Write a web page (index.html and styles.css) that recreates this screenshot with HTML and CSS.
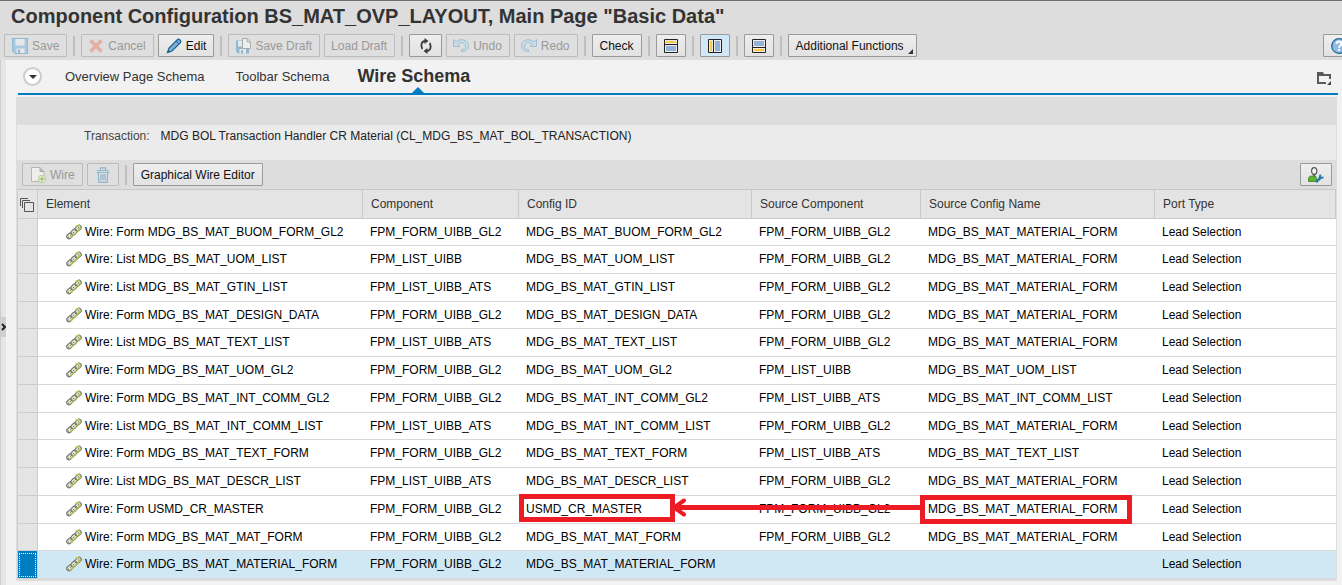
FILE: index.html
```html
<!DOCTYPE html>
<html lang="en">
<head>
<meta charset="utf-8">
<title>Component Configuration BS_MAT_OVP_LAYOUT</title>
<link rel="stylesheet" href="styles.css">
</head>
<body>
<svg class="defs" aria-hidden="true">
  <symbol id="link" viewBox="0 0 16 16">
    <g fill="#e9ead8" stroke="#77776c" stroke-width="1.2">
      <rect x="-3.2" y="-2.2" width="6.4" height="4.4" rx="2" transform="translate(3.8 11.8) rotate(-42)"/>
      <rect x="-3.2" y="-2.2" width="6.4" height="4.4" rx="2" transform="translate(8 8) rotate(-42)"/>
      <rect x="-3.2" y="-2.2" width="6.4" height="4.4" rx="2" transform="translate(12.2 4.2) rotate(-42)"/>
    </g>
    <path d="M1.500 14L14.500 2" stroke="#666" stroke-width="1" stroke-dasharray="2 1.500"/>
    <path d="M4.500 14L8 10.500M8.500 10.500L11 7.500M11.500 7L15 3.500M9.500 2.500L14 .8" stroke="#b3c14a" stroke-width="1.400" fill="none"/>
  </symbol>
  <symbol id="disk" viewBox="0 0 16 16">
    <path d="M.5.5H15.5V15.5H3L.5 13Z" fill="#a9c9dc" stroke="#8fb7cf"/>
    <path d="M3.5 1H12.5V7.5H3.5Z" fill="#e6e9eb"/>
    <path d="M4.5 10.5H12.5V15H4.5Z" fill="#e6e9eb"/>
    <path d="M6 11.5H8V15H6Z" fill="#8fb9d2"/>
  </symbol>
</svg>

<header class="page-head">
  <h1>Component Configuration BS_MAT_OVP_LAYOUT, Main Page "Basic Data"</h1>
  <div class="toolbar" role="toolbar">
    <button class="btn" disabled><svg class="ico" viewBox="0 0 16 16"><use href="#disk"/></svg>Save</button>
    <span class="sep"></span>
    <button class="btn" disabled><svg class="ico" viewBox="0 0 16 16"><path d="M2.500 2.500L13.500 13.500M13.500 2.500L2.500 13.500" stroke="#e2afa0" stroke-width="3.4"/></svg>Cancel</button>
    <button class="btn"><svg class="ico" viewBox="0 0 16 16"><path d="M1.5 14.5L3 10L11 2Q12.500 .5 14 2Q15.500 3.500 14 5L6 13Z" fill="#7fb0da" stroke="#1d6390" stroke-width="1.2"/><path d="M10 3L13 6" stroke="#1d6390" fill="none"/><path d="M1 15L2.300 11.500L4.500 13.700Z" fill="#1d6390"/></svg>Edit</button>
    <span class="sep"></span>
    <button class="btn" disabled><svg class="ico" viewBox="0 0 16 16"><path d="M1 2.500H7V9H14V15.500H3L1 13.500Z" fill="#8fb9d2"/><path d="M3 3V8.500H7V3Z M4.500 11H11V15.500H4.500Z" fill="#e6e9eb"/><path d="M6 12H8V15.500H6Z" fill="#8fb9d2"/><path d="M7.500 .5H12L15.500 4V10.500H7.500Z" fill="#efefef" stroke="#a9a9a9"/><path d="M12 .5V4H15.500" fill="none" stroke="#a9a9a9"/></svg>Save Draft</button>
    <button class="btn" disabled>Load Draft</button>
    <span class="sep"></span>
    <button class="btn btn-icon" aria-label="Refresh"><svg class="ico" viewBox="0 0 16 16"><path d="M7.500 3C3.500 3 2.300 7 4.300 11M8.500 13C12.500 13 13.700 9 11.700 5" fill="none" stroke="#3c3c3c" stroke-width="1.800"/><path d="M6.500 0L10.500 3L6.500 6ZM9.500 10V16L5.500 13Z" fill="#3c3c3c"/></svg></button>
    <button class="btn" disabled><svg class="ico" viewBox="0 0 16 16"><path d="M.5 1.500V8.500H7L4.800 6.300C7 3.500 12.500 4.500 12.500 8C12.500 10.500 11 11.500 8.500 11.500V13.500C13 13.500 15.500 11 15.500 7.500C15.500 1.500 7 0 3 3.800Z" fill="#c9dbe6" stroke="#9bc0d5"/></svg>Undo</button>
    <button class="btn" disabled><svg class="ico" viewBox="0 0 16 16"><path d="M15.500 1.500V8.500H9L11.200 6.300C9 3.500 3.500 4.500 3.500 8C3.500 10.500 5 11.500 7.500 11.500V13.500C3 13.500 .5 11 .5 7.500C.5 1.500 9 0 13 3.800Z" fill="#c9dbe6" stroke="#9bc0d5"/></svg>Redo</button>
    <span class="sep"></span>
    <button class="btn">Check</button>
    <span class="sep"></span>
    <button class="btn btn-view" aria-label="Navigation on top"><svg class="ico" viewBox="0 0 16 16"><path d="M1.500 1.500H14.500V14.500H1.500Z" fill="#ececec" stroke="#222"/><path d="M3 3H13V5H3Z" fill="#ffc83d"/><path d="M1 6.500H15" stroke="#222"/><path d="M3 8H13V13H3Z" fill="#94b2d6"/></svg></button>
    <span class="sep"></span>
    <button class="btn btn-view btn-on" aria-label="Navigation on the left" aria-pressed="true"><svg class="ico" viewBox="0 0 16 16"><path d="M1.500 1.500H14.500V14.500H1.500Z" fill="#ececec" stroke="#222"/><path d="M3 3H5V13H3Z" fill="#ffc83d"/><path d="M6.500 1V15" stroke="#222"/><path d="M8 3H13V13H8Z" fill="#94b2d6"/></svg></button>
    <span class="sep"></span>
    <button class="btn btn-view" aria-label="Navigation at the bottom"><svg class="ico" viewBox="0 0 16 16"><path d="M1.500 1.500H14.500V14.500H1.500Z" fill="#ececec" stroke="#222"/><path d="M3 3H13V8H3Z" fill="#94b2d6"/><path d="M1 9.500H15" stroke="#222"/><path d="M3 11H13V13H3Z" fill="#ffc83d"/></svg></button>
    <span class="sep"></span>
    <button class="btn btn-menu">Additional Functions<svg class="corner" viewBox="0 0 5 5"><path d="M5 0V5H0Z" fill="#333"/></svg></button>
    <button class="btn btn-help" aria-label="Help"><svg class="ico" viewBox="0 0 16 16"><circle cx="8" cy="8" r="7.300" fill="#8fbce4" stroke="#206a99" stroke-width="1.300"/><path d="M5.500 6C5.500 2.800 10.500 2.800 10.500 5.800C10.500 7.500 8 7.500 8 9.800M8 11V13" fill="none" stroke="#fff" stroke-width="2"/></svg></button>
  </div>
</header>

<div class="shell">
  <aside class="rail"><button class="rail-handle" aria-label="Expand panel"><svg class="rail-arrow" viewBox="0 0 5 8"><path d="M1 1L4 4L1 7" fill="none" stroke="#222" stroke-width="2"/></svg></button></aside>
  <main class="content">
    <nav class="tabs">
      <button class="tab-menu" aria-label="Tab list"><svg class="tri" viewBox="0 0 8 4"><path d="M0 0H8L4 4Z" fill="#333"/></svg></button>
      <a class="tab" href="#overview">Overview Page Schema</a>
      <a class="tab" href="#toolbar">Toolbar Schema</a>
      <a class="tab tab-on" href="#wire">Wire Schema</a>
      <button class="tab-folder" aria-label="Select tab"><svg class="folder" viewBox="0 0 15 14"><path d="M0 0H6L7 2H14V7H12V4H2V10H9V12H0Z" fill="#5a5a5a"/><path d="M14 9V13H10Z" fill="#444"/></svg></button>
    </nav>
    <section class="panel" id="wire">
      <div class="info"><span class="info-label">Transaction:</span><span>MDG BOL Transaction Handler CR Material (CL_MDG_BS_MAT_BOL_TRANSACTION)</span></div>
      <div class="table-bar" role="toolbar">
        <button class="btn" disabled><svg class="ico" viewBox="0 0 16 16"><path d="M1.500 .5H10L14 4.500V14.500H1.500Z" fill="#eee" stroke="#b5b5b5"/><path d="M10 .5V4.500H14" fill="#bbb" stroke="#aaa"/><circle cx="12" cy="12" r="3.700" fill="#eef1e8" stroke="#b6cf90"/><path d="M12 9.500V14.500M9.500 12H14.500" stroke="#a3c46c" stroke-width="1.500"/></svg>Wire</button>
        <button class="btn btn-bin" disabled aria-label="Delete"><svg class="ico" viewBox="0 0 16 16"><path d="M2 3.500H14M5.500 3V.8H10.500V3M3.200 4.500L3.800 15.300H12.200L12.800 4.500M1.500 5.500H14.500M6 7V13.500M8 7V13.500M10 7V13.500" fill="none" stroke="#8fb4cb" stroke-width="1.200"/></svg></button>
        <span class="sep"></span>
        <button class="btn">Graphical Wire Editor</button>
        <button class="btn btn-person" aria-label="Personalize"><svg class="ico" viewBox="0 0 16 16"><path d="M.5 14.500V11.500Q.8 9 3.500 9H6.500Q8.500 9 8.500 11.500V14.500Z" fill="#5fb52a" stroke="#3b7f17" stroke-width=".8"/><path d="M4.500 7L6.200 10L8 7Z" fill="#555"/><ellipse cx="6.200" cy="4" rx="2.600" ry="3.400" fill="#f6f6f6" stroke="#555" stroke-width="1.200"/><path d="M8 15L13 10.500" stroke="#2878ab" stroke-width="2.400"/><path d="M12.500 7.500L11.500 10.800L15.500 10.500" fill="none" stroke="#2878ab" stroke-width="1.800"/></svg></button>
      </div>
      <div class="grid-wrap">
        <table class="grid">
          <colgroup><col class="c-sel"><col class="c-el"><col class="c-comp"><col class="c-cfg"><col class="c-src"><col class="c-name"><col></colgroup>
          <thead><tr><th class="sel"><svg class="stack" viewBox="0 0 16 16"><path d="M1.500 9V1.500H9M3.500 11V3.500H11M5.500 5.500H14.500V14.500H5.500Z" fill="none" stroke="#555"/></svg></th><th>Element</th><th>Component</th><th>Config ID</th><th>Source Component</th><th>Source Config Name</th><th>Port Type</th></tr></thead>
          <tbody>
            <tr><td class="sel"></td><td class="el"><svg class="link" viewBox="0 0 16 16"><use href="#link"/></svg>Wire: Form MDG_BS_MAT_BUOM_FORM_GL2</td><td>FPM_FORM_UIBB_GL2</td><td>MDG_BS_MAT_BUOM_FORM_GL2</td><td>FPM_FORM_UIBB_GL2</td><td>MDG_BS_MAT_MATERIAL_FORM</td><td>Lead Selection</td></tr>
            <tr><td class="sel"></td><td class="el"><svg class="link" viewBox="0 0 16 16"><use href="#link"/></svg>Wire: List MDG_BS_MAT_UOM_LIST</td><td>FPM_LIST_UIBB</td><td>MDG_BS_MAT_UOM_LIST</td><td>FPM_FORM_UIBB_GL2</td><td>MDG_BS_MAT_MATERIAL_FORM</td><td>Lead Selection</td></tr>
            <tr><td class="sel"></td><td class="el"><svg class="link" viewBox="0 0 16 16"><use href="#link"/></svg>Wire: List MDG_BS_MAT_GTIN_LIST</td><td>FPM_LIST_UIBB_ATS</td><td>MDG_BS_MAT_GTIN_LIST</td><td>FPM_FORM_UIBB_GL2</td><td>MDG_BS_MAT_MATERIAL_FORM</td><td>Lead Selection</td></tr>
            <tr><td class="sel"></td><td class="el"><svg class="link" viewBox="0 0 16 16"><use href="#link"/></svg>Wire: Form MDG_BS_MAT_DESIGN_DATA</td><td>FPM_FORM_UIBB_GL2</td><td>MDG_BS_MAT_DESIGN_DATA</td><td>FPM_FORM_UIBB_GL2</td><td>MDG_BS_MAT_MATERIAL_FORM</td><td>Lead Selection</td></tr>
            <tr><td class="sel"></td><td class="el"><svg class="link" viewBox="0 0 16 16"><use href="#link"/></svg>Wire: List MDG_BS_MAT_TEXT_LIST</td><td>FPM_LIST_UIBB_ATS</td><td>MDG_BS_MAT_TEXT_LIST</td><td>FPM_FORM_UIBB_GL2</td><td>MDG_BS_MAT_MATERIAL_FORM</td><td>Lead Selection</td></tr>
            <tr><td class="sel"></td><td class="el"><svg class="link" viewBox="0 0 16 16"><use href="#link"/></svg>Wire: Form MDG_BS_MAT_UOM_GL2</td><td>FPM_FORM_UIBB_GL2</td><td>MDG_BS_MAT_UOM_GL2</td><td>FPM_LIST_UIBB</td><td>MDG_BS_MAT_UOM_LIST</td><td>Lead Selection</td></tr>
            <tr><td class="sel"></td><td class="el"><svg class="link" viewBox="0 0 16 16"><use href="#link"/></svg>Wire: Form MDG_BS_MAT_INT_COMM_GL2</td><td>FPM_FORM_UIBB_GL2</td><td>MDG_BS_MAT_INT_COMM_GL2</td><td>FPM_LIST_UIBB_ATS</td><td>MDG_BS_MAT_INT_COMM_LIST</td><td>Lead Selection</td></tr>
            <tr><td class="sel"></td><td class="el"><svg class="link" viewBox="0 0 16 16"><use href="#link"/></svg>Wire: List MDG_BS_MAT_INT_COMM_LIST</td><td>FPM_LIST_UIBB_ATS</td><td>MDG_BS_MAT_INT_COMM_LIST</td><td>FPM_FORM_UIBB_GL2</td><td>MDG_BS_MAT_MATERIAL_FORM</td><td>Lead Selection</td></tr>
            <tr><td class="sel"></td><td class="el"><svg class="link" viewBox="0 0 16 16"><use href="#link"/></svg>Wire: Form MDG_BS_MAT_TEXT_FORM</td><td>FPM_FORM_UIBB_GL2</td><td>MDG_BS_MAT_TEXT_FORM</td><td>FPM_LIST_UIBB_ATS</td><td>MDG_BS_MAT_TEXT_LIST</td><td>Lead Selection</td></tr>
            <tr><td class="sel"></td><td class="el"><svg class="link" viewBox="0 0 16 16"><use href="#link"/></svg>Wire: List MDG_BS_MAT_DESCR_LIST</td><td>FPM_LIST_UIBB_ATS</td><td>MDG_BS_MAT_DESCR_LIST</td><td>FPM_FORM_UIBB_GL2</td><td>MDG_BS_MAT_MATERIAL_FORM</td><td>Lead Selection</td></tr>
            <tr><td class="sel"></td><td class="el"><svg class="link" viewBox="0 0 16 16"><use href="#link"/></svg>Wire: Form USMD_CR_MASTER</td><td>FPM_FORM_UIBB_GL2</td><td>USMD_CR_MASTER</td><td>FPM_FORM_UIBB_GL2</td><td>MDG_BS_MAT_MATERIAL_FORM</td><td>Lead Selection</td></tr>
            <tr><td class="sel"></td><td class="el"><svg class="link" viewBox="0 0 16 16"><use href="#link"/></svg>Wire: Form MDG_BS_MAT_MAT_FORM</td><td>FPM_FORM_UIBB_GL2</td><td>MDG_BS_MAT_MAT_FORM</td><td>FPM_FORM_UIBB_GL2</td><td>MDG_BS_MAT_MATERIAL_FORM</td><td>Lead Selection</td></tr>
            <tr class="row-on"><td class="sel"></td><td class="el"><svg class="link" viewBox="0 0 16 16"><use href="#link"/></svg>Wire: Form MDG_BS_MAT_MATERIAL_FORM</td><td>FPM_FORM_UIBB_GL2</td><td>MDG_BS_MAT_MATERIAL_FORM</td><td></td><td></td><td>Lead Selection</td></tr>
          </tbody>
        </table>
        <svg class="callout" viewBox="0 0 613 30" aria-hidden="true">
          <g fill="none" stroke="#ed1c24">
            <path d="M2.500 2.500H153.500V25.500H2.500Z M403.500 3.500H610.500V27.500H403.500Z" stroke-width="5"/>
            <path d="M155 13.500H405" stroke-width="5"/>
            <path d="M165 6.500L155 13.500L165 20.500" stroke-width="4" stroke-linecap="round"/>
          </g>
        </svg>
      </div>
    </section>
  </main>
</div>
</body>
</html>
```

FILE: styles.css
```css
* { box-sizing: border-box; }

body {
  margin: 0;
  min-height: 100vh;
  display: flex;
  flex-direction: column;
  overflow: hidden;
  background: #f2f2f2;
  color: #000;
  font: 12px/16px "Liberation Sans", Arial, sans-serif;
}

.defs { position: absolute; width: 0; height: 0; }

button { font: inherit; color: inherit; }

.page-head {
  border-top: 1px solid #6e6e6e;
  background: #ddd;
}

h1 {
  margin: 0;
  padding: 3px 11px 6px;
  font-size: 20px;
  line-height: 24px;
  color: #333;
  white-space: nowrap;
}

.toolbar {
  display: flex;
  align-items: center;
  gap: 4px;
  height: 26px;
  padding: 0 0 3px 4px;
}

.btn {
  display: flex;
  flex: none;
  align-items: center;
  justify-content: center;
  gap: 4px;
  height: 23px;
  padding: 0 7px;
  border: 1px solid #9a9a9a;
  border-radius: 1px;
  background: linear-gradient(#eee, #e2e2e2);
  color: #111;
  white-space: nowrap;
}

.btn:disabled {
  border-color: #bcbcbc;
  background: #dfdfdf;
  color: #999;
}

.toolbar .btn:disabled { padding: 0 7px 0 6px; }
.toolbar .btn:first-child { padding: 0 7px; }

.ico { flex: none; width: 16px; height: 16px; }
.btn-icon { width: 33px; }
.btn-bin { width: 32px; }
.btn-view { width: 30px; }
.btn-on { background: #d0e8f5; }
.btn-menu { position: relative; padding-right: 12px; }

.corner {
  position: absolute;
  right: 3px;
  bottom: 2px;
  width: 5px;
  height: 5px;
}

.btn-help { margin-left: auto; margin-right: -13px; width: 32px; }

.sep {
  flex: none;
  width: 2px;
  height: 20px;
  margin: 0 2px;
  background: #bfbfbf;
}

.shell { display: flex; flex: 1; }

.rail {
  display: flex;
  align-items: center;
  width: 6px;
  padding-top: 8px;
  border-left: 1px solid #ccc;
  background: #e6e6e6;
}

.rail-handle {
  display: flex;
  align-items: center;
  width: 5px;
  height: 20px;
  padding: 0;
  border: 0;
  background: #d0d0d0;
}

.rail-arrow { width: 5px; height: 8px; }

.content { flex: 1; min-width: 0; padding: 0 5px 0 10px; }

.tabs {
  display: flex;
  align-items: center;
  height: 35px;
  margin: 0 -1px 2px 2px;
  padding: 0 6px 0 5px;
  border-bottom: 2px solid #007cc0;
}

.tab-menu {
  display: flex;
  align-items: center;
  justify-content: center;
  width: 19px;
  height: 19px;
  margin-right: 23px;
  padding: 0;
  border: 2px solid #ccc;
  border-radius: 50%;
  background: #fff;
}

.tri { width: 8px; height: 4px; }

.tab {
  margin-right: 31px;
  color: #333;
  font-size: 13px;
  text-decoration: none;
}

.tab-on {
  position: relative;
  margin-left: -3px;
  padding-bottom: 2px;
  font-size: 18px;
  font-weight: bold;
}

.tab-on::after {
  content: "";
  position: absolute;
  left: 50%;
  bottom: -7px;
  margin-left: -2px;
  border: 6px solid transparent;
  border-top: 0;
  border-bottom-color: #007cc0;
}

.tab-folder {
  margin-left: auto;
  padding: 4px 0 0;
  border: 0;
  background: none;
}

.folder { display: block; width: 15px; height: 14px; }

.panel {
  padding: 28px 1px 2px;
  background: #ddd;
}

.info {
  display: flex;
  gap: 11px;
  height: 35px;
  padding: 3px 0 0 67px;
  background: #ebebeb;
  color: #222;
}

.info-label { color: #444; }

.table-bar {
  display: flex;
  align-items: center;
  gap: 4px;
  height: 29px;
  padding: 0 4px 0 5px;
}

.btn-person { margin-left: auto; width: 32px; }

.grid-wrap { position: relative; }

.grid {
  width: 100%;
  table-layout: fixed;
  border-collapse: separate;
  border-spacing: 0;
  border-top: 1px solid #c8c8c8;
  background: #fff;
}

.c-sel { width: 21px; }
.c-el { width: 325px; }
.c-comp { width: 156px; }
.c-cfg { width: 233px; }
.c-src { width: 169px; }
.c-name { width: 234px; }

th, td {
  padding: 0 8px;
  border-bottom: 1px solid #d9d9d9;
  text-align: left;
  white-space: nowrap;
}

th {
  height: 29px;
  border-right: 1px solid #c8c8c8;
  border-bottom-color: #c8c8c8;
  background: #e4e4e4;
  color: #333;
  font-weight: normal;
}

td { height: 28px; padding: 0 7px 1px; }
tr:first-child td, tr:nth-child(4n) td { height: 27px; }

.sel {
  padding: 0;
  border-left: 1px solid #ccc;
  border-right: 1px solid #ccc;
  border-bottom-color: #ccc;
  background: #e4e4e4;
}

.stack { display: block; width: 16px; height: 16px; margin: 2px 0 0 1px; }

.el { padding-left: 28px; }
.link { width: 16px; height: 16px; margin-right: 3px; vertical-align: -4px; }

.row-on td { background: #d0e7f4; }
.row-on .sel { background: #007cc0; outline: 1px dotted #fff; outline-offset: -3px; }

.callout {
  position: absolute;
  left: 502px;
  top: 305px;
  width: 613px;
  height: 30px;
}
```
